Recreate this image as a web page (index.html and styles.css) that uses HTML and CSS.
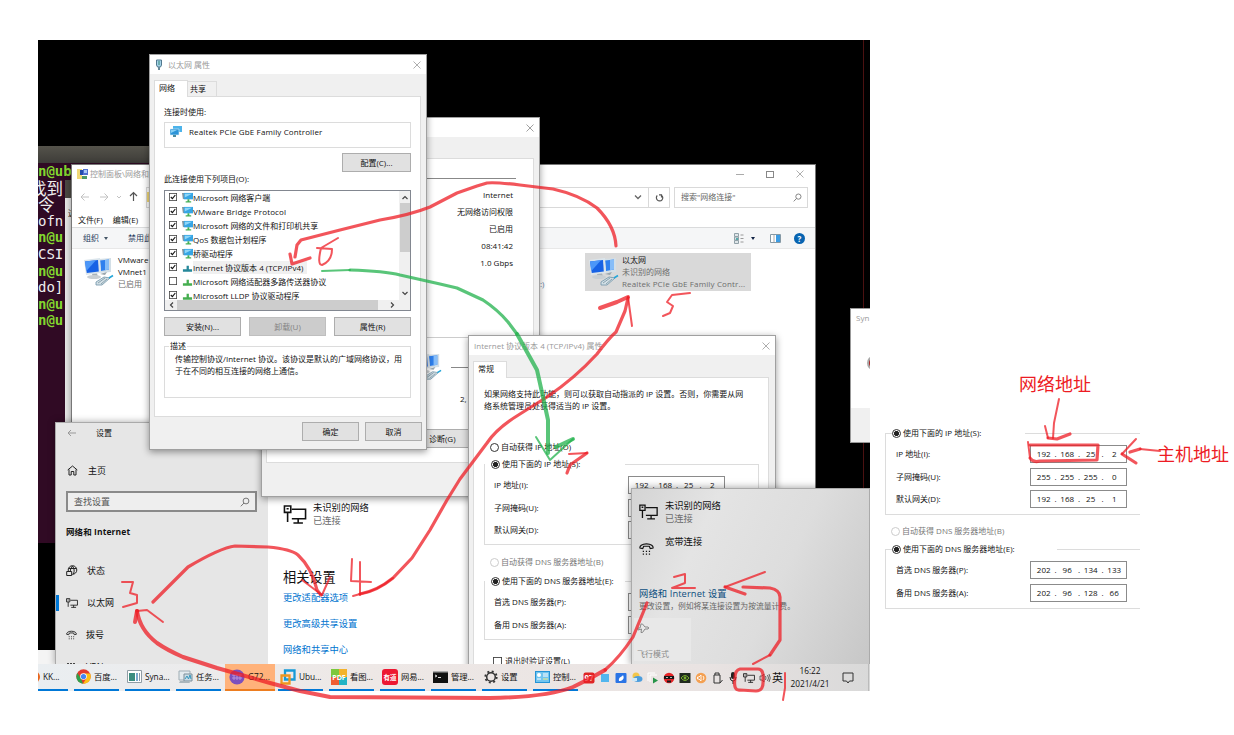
FILE: index.html
```html
<!DOCTYPE html>
<html lang="zh-CN">
<head>
<meta charset="utf-8">
<title>网络连接设置</title>
<link rel="stylesheet" href="styles.css">
</head>
<body>
<svg class="defs" width="0" height="0">
  <symbol id="x" viewBox="0 0 8 8"><path d="M.5.5l7 7M7.5.5l-7 7" fill="none" stroke="currentColor" stroke-width=".8"/></symbol>
  <symbol id="pcs" viewBox="0 0 32 32">
    <path d="M17 3l12-1v14l-12 1z" fill="#d3dfe7"/><path d="M18 4.500l9-1v10l-8 1.500z" fill="#2f80ee"/><path d="M23 4l4-.5v10l-4 .8z" fill="#86bdf8"/>
    <path d="M2 4l16-2 1 15-15 2z" fill="#dbe5ec"/><path d="M3 5.500l13-1.500.8 11.500-12 1.500z" fill="#1762e5"/><path d="M3 5.500l11-1.300-9 10-1 0z" fill="#4c97f8"/>
    <path d="M10 18l5-.5 1 3-5 .5z" fill="#a9b3b9"/><ellipse cx="12" cy="21" rx="7" ry="2" fill="#c9cfd3"/><path d="M18 18l7-2-2 3z" fill="#9aa6ad"/>
    <path d="M14 26l8-5 6 1-8 7-6 0z" fill="#d3e0e6" stroke="#6f93a7" stroke-width=".8"/><path d="M16 27l7-5M19 28l6-5" stroke="#688595" stroke-width=".7"/><path d="M27 22l4-2.500" stroke="#24a6d8" stroke-width="1.600"/>
  </symbol>
  <symbol id="mon" viewBox="0 0 12 12"><path d="M0 1l3 0v6l-2 1z" fill="#8496a0"/><path d="M2 1h10v7H2z" fill="#36a5e4"/><path d="M3 2h8L3 6z" fill="#8ed6f8"/><path d="M6 8h2v2h2v1.500H4V10h2z" fill="#45ae56"/></symbol>
  <symbol id="duo" viewBox="0 0 12 12"><path d="M3 0h9v6H3z" fill="#4cb3ea"/><path d="M0 3h9v6H0z" fill="#2c94d8" stroke="#d8ecf6" stroke-width=".6"/><path d="M1 4h6L1 7z" fill="#86cff5"/><path d="M3 9h3v2H3z" fill="#4a8a9c"/></symbol>
  <symbol id="net" viewBox="0 0 12 12"><path d="M5 4h2.500v4H11v2.500H1V8h4z" fill="currentColor"/></symbol>
  <symbol id="check" viewBox="0 0 8 8"><rect x=".4" y=".4" width="7.200" height="7.200" fill="#fff" stroke="#444" stroke-width=".8"/><path d="M1.800 4l1.600 1.700L6.300 2" fill="none" stroke="#111" stroke-width="1.100"/></symbol>
  <symbol id="uncheck" viewBox="0 0 8 8"><rect x=".4" y=".4" width="7.200" height="7.200" fill="#fff" stroke="#444" stroke-width=".8"/></symbol>
  <symbol id="lan" viewBox="0 0 22 18"><path d="M8 4h13v9H8M1 1h6v6H1zM3 3.500h2M4 7v9M14 13v4M9.500 17h9" fill="none" stroke="currentColor" stroke-width="1.500"/></symbol>
  <symbol id="phone" viewBox="0 0 16 14"><path d="M1 6c-.5-2 2-4.500 7-4.500S15.500 4 15 6l-3 .5-1-2.500H5L4 6.500z" fill="none" stroke="currentColor" stroke-width="1.200"/><path d="M4 9.500h1.300M7.300 9.500h1.300M10.500 9.500h1.300M4 12.500h1.300M7.300 12.500h1.300M10.500 12.500h1.300" stroke="currentColor" stroke-width="1.200"/></symbol>
  <symbol id="mag" viewBox="0 0 10 10"><circle cx="6" cy="4" r="2.900" fill="none" stroke="#777"/><path d="M4 6L.8 9.300" stroke="#777"/></symbol>
  <symbol id="folder" viewBox="0 0 12 12"><path d="M0 1h5v10H0z" fill="#f1d878"/><path d="M3 2h6v5H3z" fill="#244dad"/><path d="M6 1h5v6H6z" fill="#4f6fd0"/><path d="M7 2h3v3H7z" fill="#a9c8f5"/><path d="M5 8h5v3H5z" fill="#4c9a64"/></symbol>
</svg>

<main class="desktop">
  <section class="term">
    <div class="term-bar"></div>
    <div class="term-body">
      <p class="g">n@ub</p><p class="cjk cut">找到</p><p class="cjk">令</p><p>ofn</p><p class="g">n@u</p><p>CSI</p><p class="g">n@u</p><p>do]</p><p class="g">n@u</p><p class="g">n@u</p>
    </div>
  </section>
  <section class="vm-edge"><i></i><span>这</span></section>
  <div class="vm-line"></div>
  <div class="under"></div>

  <section class="win explorer">
    <header class="ex-title"><svg width="12" height="12"><use href="#folder"/></svg><span>控制面板\网络和</span>
      <div class="caps"><i class="min"></i><i class="max"></i><svg width="8" height="8"><use href="#x"/></svg></div></header>
    <div class="ex-nav">
      <svg width="64" height="12" fill="none" stroke="#c2c2c2"><path d="M1 6h8M4.500 2.500L1 6l3.500 3.500M20 6h8M24.500 2.500L28 6l-3.500 3.500M37 5l2 2 2-2"/><path d="M53.500 10V2M50 5l3.500-3.500L57 5" stroke="#555" stroke-width="1.200"/></svg>
      <div class="addr"><svg width="12" height="12"><use href="#folder"/></svg><b></b><svg width="8" height="6" fill="none" stroke="#666" stroke-width="1.300"><path d="M1 1.500l3 3 3-3"/></svg><em><svg width="9" height="9" fill="none" stroke="#555" stroke-width="1.200"><path d="M2.300 2.500A3.200 3.200 0 1 0 6.500 2.200M6.500 4.500V1.800H4"/></svg></em></div>
      <div class="find"><span>搜索"网络连接"</span><svg width="9" height="9"><use href="#mag"/></svg></div>
    </div>
    <div class="ex-menu"><span>文件(F)</span><span>编辑(E)</span></div>
    <div class="ex-tool"><span>组织</span><u></u><span>禁用此</span><b></b>
      <svg width="10" height="11"><path d="M.5.5h4v3h-4zM.5 4h4v3h-4zM.5 7.500h4v3h-4z" fill="#dfe6e9" stroke="#91a1a8"/><path d="M2 5h2v2H2z" fill="#5aa"/><path d="M6.500 2h3M6.500 5.500h3M6.500 9h3" stroke="#999"/></svg><u class="dark"></u>
      <svg width="11" height="9"><path d="M.5.5h10v8H.5z" fill="#fff" stroke="#8599a5"/><path d="M6 1h4v7H6z" fill="#3c9ce3"/><path d="M4 1v7" stroke="#aaa"/></svg><strong>?</strong></div>
    <div class="ex-items">
      <div class="conn first"><svg width="32" height="32"><use href="#pcs"/></svg><p>VMware<br>VMnet1<br><small>已启用</small></p></div>
      <span class="tail">:)</span>
      <div class="conn chosen"><svg width="32" height="32"><use href="#pcs"/></svg><p>以太网<br><small>未识别的网络<br><span class="nic">Realtek PCIe GbE Family Contr...</span></small></p></div>
    </div>
  </section>

  <section class="syn"><span>Syn</span><i></i><b></b></section>

  <section class="settings">
    <aside>
      <div class="set-top"><svg width="9" height="8" fill="none" stroke="#999"><path d="M9 4H1M4 1L1 4l3 3"/></svg><span>设置</span></div>
      <div class="set-home"><svg width="11" height="11" fill="none" stroke="#222"><path d="M.7 5L5.500 1l4.800 4M2 4.500V10h2.200V6.500h2.600V10H9V4.500"/></svg><span>主页</span></div>
      <div class="set-find"><span>查找设置</span><svg width="10" height="10"><use href="#mag"/></svg></div>
      <h2>网络和 Internet</h2>
      <ul>
        <li><svg width="12" height="12" fill="none" stroke="#222"><circle cx="6.500" cy="5" r="4.300"/><path d="M2.500 3.500h8M6.500 1C4 4 4 6 5 9M6.500 1c2 3 2 5 1 8"/><path d="M.7 6.500h5v4h-5z" fill="#e6e6e6"/></svg>状态</li>
        <li class="on"><svg width="12" height="10"><use href="#lan"/></svg>以太网</li>
        <li><svg width="11" height="10"><use href="#phone"/></svg>拨号</li>
        <li class="vpn"><svg width="11" height="10"><path d="M1 2h2M4 2h2M7 2h2" stroke="#111" stroke-width="1.500"/></svg>VPN</li>
      </ul>
    </aside>
    <article>
      <div class="lan-state"><svg width="24" height="19"><use href="#lan"/></svg><p>未识别的网络<br><small>已连接</small></p></div>
      <h3>相关设置</h3>
      <a>更改适配器选项</a><a>更改高级共享设置</a><a>网络和共享中心</a>
    </article>
  </section>

  <section class="win status">
    <header><svg width="8" height="8"><use href="#x"/></svg></header>
    <div class="st-panel">
      <div class="rule"></div>
      <p>Internet</p><p>无网络访问权限</p><p>已启用</p><p>08:41:42</p><p>1.0 Gbps</p>
      <div class="rule2"></div>
      <div class="act"><svg width="30" height="34"><use href="#pcs"/></svg><i></i></div>
      <div class="num">2,</div>
      <div class="btn diag">诊断(G)</div>
    </div>
  </section>

  <section class="win props">
    <header><svg width="8" height="11"><path d="M1.500 1h5v5l-1 2h-3l-1-2z" fill="#a5d2e8" stroke="#51788e"/><path d="M4 2v4" stroke="#387"/><path d="M3 8h2v3H3z" fill="#67899a"/></svg><span>以太网 属性</span><svg class="close" width="8" height="8"><use href="#x"/></svg></header>
    <nav><b>网络</b><span>共享</span></nav>
    <div class="panel">
      <label class="l1">连接时使用:</label>
      <div class="adapter"><svg width="12" height="12"><use href="#duo"/></svg><span>Realtek PCIe GbE Family Controller</span></div>
      <div class="cfg"><div class="btn">配置(C)...</div></div>
      <label class="l2">此连接使用下列项目(O):</label>
      <div class="list">
        <div class="rows">
          <div><svg width="8" height="8"><use href="#check"/></svg><svg width="11" height="11"><use href="#mon"/></svg><span>Microsoft 网络客户端</span></div>
          <div><svg width="8" height="8"><use href="#check"/></svg><svg width="11" height="11"><use href="#mon"/></svg><span class="wide">VMware Bridge Protocol</span></div>
          <div><svg width="8" height="8"><use href="#check"/></svg><svg width="11" height="11"><use href="#mon"/></svg><span>Microsoft 网络的文件和打印机共享</span></div>
          <div><svg width="8" height="8"><use href="#check"/></svg><svg width="11" height="11"><use href="#mon"/></svg><span>QoS 数据包计划程序</span></div>
          <div><svg width="8" height="8"><use href="#check"/></svg><svg width="11" height="11"><use href="#mon"/></svg><span>桥驱动程序</span></div>
          <div><svg width="8" height="8"><use href="#check"/></svg><svg class="teal" width="11" height="11"><use href="#net"/></svg><span class="sel">Internet 协议版本 4 (TCP/IPv4)</span></div>
          <div><svg width="8" height="8"><use href="#uncheck"/></svg><svg class="green" width="11" height="11"><use href="#net"/></svg><span>Microsoft 网络适配器多路传送器协议</span></div>
          <div><svg width="8" height="8"><use href="#check"/></svg><svg class="green" width="11" height="11"><use href="#net"/></svg><span>Microsoft LLDP 协议驱动程序</span></div>
        </div>
        <div class="vs"><svg width="6" height="5"><path d="M.5 4L3 1.500 5.500 4" fill="none" stroke="#444" stroke-width="1.200"/></svg><i></i><svg width="6" height="5"><path d="M.5 1L3 3.500 5.500 1" fill="none" stroke="#444" stroke-width="1.200"/></svg></div>
        <div class="hs"><svg width="5" height="6"><path d="M4 .5L1.500 3 4 5.500" fill="none" stroke="#444" stroke-width="1.200"/></svg><i></i><svg width="5" height="6"><path d="M1 .5L3.500 3 1 5.500" fill="none" stroke="#444" stroke-width="1.200"/></svg></div>
      </div>
      <div class="three"><div class="btn">安装(N)...</div><div class="btn off">卸载(U)</div><div class="btn">属性(R)</div></div>
      <fieldset class="desc"><legend>描述</legend>传输控制协议/Internet 协议。该协议是默认的广域网络协议，用<br>于在不同的相互连接的网络上通信。</fieldset>
    </div>
    <footer><div class="btn">确定</div><div class="btn">取消</div></footer>
  </section>

  <section class="win ip">
    <header><span>Internet 协议版本 4 (TCP/IPv4) 属性</span><svg class="close" width="8" height="8"><use href="#x"/></svg></header>
    <nav><b>常规</b></nav>
    <div class="panel">
      <p>如果网络支持此功能，则可以获取自动指派的 IP 设置。否则，你需要从网<br>络系统管理员处获得适当的 IP 设置。</p>
      <div class="radio"><i></i>自动获得 IP 地址(O)</div>
      <div class="group">
        <div class="radio cap on"><i></i>使用下面的 IP 地址(S):</div>
        <div class="field"><label>IP 地址(I):</label><div class="ipbox"><b>192</b><b>168</b><b>25</b><b>2</b></div></div>
        <div class="field"><label>子网掩码(U):</label><div class="ipbox"></div></div>
        <div class="field"><label>默认网关(D):</label><div class="ipbox"></div></div>
      </div>
      <div class="radio dim"><i></i>自动获得 DNS 服务器地址(B)</div>
      <div class="group dns">
        <div class="radio cap on"><i></i>使用下面的 DNS 服务器地址(E):</div>
        <div class="field"><label>首选 DNS 服务器(P):</label><div class="ipbox"></div></div>
        <div class="field"><label>备用 DNS 服务器(A):</label><div class="ipbox"></div></div>
      </div>
      <div class="verify"><svg width="9" height="9"><use href="#uncheck"/></svg>退出时验证设置(L)</div>
    </div>
  </section>

  <section class="flyout">
    <div class="fly-row"><svg width="19" height="16"><use href="#lan"/></svg><p>未识别的网络<br><small>已连接</small></p></div>
    <div class="fly-row second"><svg width="15" height="14"><use href="#phone"/></svg><p>宽带连接</p></div>
    <h4>网络和 Internet 设置</h4>
    <p class="hint">更改设置，例如将某连接设置为按流量计费。</p>
    <div class="tile"><svg width="13" height="12" fill="none" stroke="#888"><path d="M1 6l2 0 1-4 1.500 0L8 5h3q1.500 1 0 2H8L5.500 10.500H4L4.500 7 1 8z"/></svg><span>飞行模式</span></div>
  </section>

  <footer class="taskbar">
    <div class="task cut"><svg width="14" height="14"><circle cx="5" cy="7" r="6" fill="#e8641b"/></svg>KK...</div>
    <div class="task"><svg width="15" height="15"><circle cx="7.500" cy="7.500" r="7.200" fill="#e33b2e"/><path d="M1.300 4L5 9.500l2 5.200A7.200 7.200 0 0 1 1.300 4z" fill="#2da14c"/><path d="M7.500 4.500h6.600A7.200 7.200 0 0 1 7 14.700L10.500 9z" fill="#fbc116"/><circle cx="7.500" cy="7.500" r="3.300" fill="#fff"/><circle cx="7.500" cy="7.500" r="2.600" fill="#4285f4"/></svg>百度...</div>
    <div class="task"><svg width="15" height="13"><path d="M.5.5h14v12H.5z" fill="#fff" stroke="#8f9da5"/><path d="M2 3h6v8H2z" fill="#3b8d80"/><path d="M9 3h2v8H9z" fill="#79a8cd"/><path d="M12 3h1v8h-1z" fill="#89a"/></svg>Syna...</div>
    <div class="task"><svg width="15" height="13"><path d="M1 1h11v9H1z" fill="#e3eaee" stroke="#9fadb5"/><path d="M6 4h8v7H6z" fill="#c9dce6" stroke="#7c8f9a"/><path d="M7 9l2-3 1.500 3L12 5l1 4" fill="none" stroke="#3596bc"/><path d="M2 11l9 0 1 2H1z" fill="#aab6bc"/></svg>任务...</div>
    <div class="task hot"><svg width="16" height="16"><circle cx="8" cy="8" r="7.600" fill="#7d50bd"/><path d="M3 6h10M3 9h10M5 5v6M8 5v6M11 5v6" stroke="#b494df"/></svg>G72...</div>
    <div class="task"><svg width="16" height="16" fill="none" stroke-width="2.300"><path d="M5 1.500h9.500v9H5z" stroke="#169bd7"/><path d="M1.500 6.500h8v8h-8z" stroke="#ef9620"/></svg>Ubu...</div>
    <div class="task"><svg width="16" height="16"><path d="M0 0h8v8H0z" fill="#7dc83d"/><path d="M8 0h8v8H8z" fill="#f4b32c"/><path d="M0 8h8v8H0z" fill="#f05c32"/><path d="M8 8h8v8H8z" fill="#23b3c5"/><text x="8" y="11" text-anchor="middle" class="pdf">PDF</text></svg>看图...</div>
    <div class="task"><svg width="16" height="16"><rect width="16" height="16" rx="3" fill="#ed1832"/><text x="8" y="11" text-anchor="middle" class="yd">有道</text></svg>网易...</div>
    <div class="task"><svg width="15" height="12"><path d="M0 0h15v12H0z" fill="#111"/><path d="M0 0h15v1.500H0z" fill="#aaa"/><path d="M2 4l2 1-2 1M5 6.500h3" stroke="#ddd" fill="none"/></svg>管理...</div>
    <div class="task"><svg width="14" height="14" fill="none" stroke="#333"><circle cx="7" cy="7" r="4.300" stroke-width="1.500"/><circle cx="7" cy="7" r="5.700" stroke-width="1.800" stroke-dasharray="2 2.480"/></svg>设置</div>
    <div class="task"><svg width="15" height="12"><path d="M0 0h15v12H0z" fill="#2493d6"/><path d="M1 1h13v10H1z" fill="#72c5ef"/><circle cx="4" cy="4" r="2" fill="#fff"/><path d="M8 3h5M8 5h5M2 8h4" stroke="#fff"/><path d="M8 8h5" stroke="#ee8"/></svg>控制...</div>
    <div class="tray">
      <svg width="12" height="12"><rect x=".5" y=".5" width="11" height="11" rx="2" fill="#df2525"/><text x="6" y="9" class="t97" text-anchor="middle">97</text></svg>
      <svg width="12" height="12"><path d="M2 2h8v8H2z" fill="#52b6ee"/></svg>
      <svg width="12" height="12"><rect x=".5" y="1" width="11" height="10" rx="1" fill="#2b74e5"/><path d="M4 9C3 5 7 5 8 3c2 4-1 6-4 6z" fill="#fff"/></svg>
      <svg width="12" height="12"><circle cx="5" cy="4" r="3.500" fill="#f2c64b"/><ellipse cx="7" cy="7" rx="4.500" ry="3" fill="#4c9ddd"/><path d="M1 6h5v3H1z" fill="#cce8f8"/></svg>
      <svg width="12" height="12"><path d="M1 9V1h7M3 10V3h7" stroke="#fff" fill="none"/><path d="M6 5.500l5 3-5 3z" fill="#279448"/></svg>
      <svg width="12" height="12"><circle cx="6" cy="6" r="5.300" fill="#e42427"/><path d="M1 4h10v3H1z" fill="#171717"/><path d="M3 5.500h2M7 5.500h2" stroke="#fff" stroke-width=".7"/><path d="M4 8.500h4v2H4z" fill="#181818"/></svg>
      <svg width="12" height="12"><path d="M.5 1h11v10H.5z" fill="#20291e"/><path d="M2 6q4-5 8 0-4 5-8 0z" fill="none" stroke="#78ae2c"/><circle cx="6" cy="6" r="1.400" fill="#78ae2c"/></svg>
      <svg width="12" height="12"><circle cx="6" cy="6" r="5.300" fill="#f4a052"/><path d="M2.500 5h1.500l2-2v6L4 7H2.500zM8 4q2 2 0 4" fill="none" stroke="#fff" stroke-width=".9"/></svg>
      <svg width="12" height="12" fill="none" stroke="#333"><path d="M4 3V1h4v2M3 3h6v8H3zM9 11l2.500-3"/></svg>
      <svg width="12" height="12"><rect x="4" y="0" width="4" height="7" rx="2" fill="#222"/><path d="M3 5q0 4 3 4t3-4M6 9v3" fill="none" stroke="#222"/></svg>
      <svg width="12" height="12"><use href="#lan" width="12" height="12"/></svg>
      <svg width="12" height="12" fill="none" stroke="#444"><path d="M1 4h2l2-2v8L3 8H1zM6.500 4q1 2 0 4M8.500 3q2 3 0 6M10 2q2.500 4 0 8" stroke-width=".8"/></svg>
      <span>英</span>
    </div>
    <time>16:22<br>2021/4/21</time>
    <svg class="note" width="12" height="12" fill="none" stroke="#333"><path d="M1 1h10v8H7.500L6 11 4.500 9H1z"/></svg>
    <i class="peek"></i>
  </footer>
</main>

<section class="excerpt">
  <div class="group">
    <div class="radio cap on"><i></i>使用下面的 IP 地址(S):</div>
    <div class="field"><label>IP 地址(I):</label><div class="ipbox"><b>192</b><b>168</b><b>25</b><b>2</b></div></div>
    <div class="field"><label>子网掩码(U):</label><div class="ipbox"><b>255</b><b>255</b><b>255</b><b>0</b></div></div>
    <div class="field"><label>默认网关(D):</label><div class="ipbox"><b>192</b><b>168</b><b>25</b><b>1</b></div></div>
  </div>
  <div class="radio dim"><i></i>自动获得 DNS 服务器地址(B)</div>
  <div class="group dns">
    <div class="radio cap on"><i></i>使用下面的 DNS 服务器地址(E):</div>
    <div class="field"><label>首选 DNS 服务器(P):</label><div class="ipbox"><b>202</b><b>96</b><b>134</b><b>133</b></div></div>
    <div class="field"><label>备用 DNS 服务器(A):</label><div class="ipbox"><b>202</b><b>96</b><b>128</b><b>66</b></div></div>
  </div>
</section>

<strong class="note-net">网络地址</strong>
<strong class="note-host">主机地址</strong>

<svg class="ink" width="1234" height="735" viewBox="0 0 1234 735">
  <g class="red">
    <path class="mid" d="M616 246Q615 226 597 208Q580 195 553 189L520 185Q495 182 487 183L477 186L457 193L430 207Q410 215 380 220L340 230L301 240L297 245L295 257"/>
    <path class="mid" d="M290 254L292 264L310 258"/>
    <path class="thin" d="M338 238L321 248Q317 265 322 265Q332 261 332 249L317 248"/>
    <path class="thin" d="M353 596L360 594Q377 591 393 578"/>
    <path class="mid" d="M360 594Q377 591 393 578L412 558L430 530L447 500L460 479L487 443Q497 428 520 414L547 397Q575 378 597 354Q609 338 616 332L625 311L628 298"/>
    <path d="M600 308L617 302L628 297"/><path class="thin" d="M628 297L632 326"/>
    <path class="thin" d="M690 293L672 295L667 302L673 306L670 313L663 316"/>
    <path class="thin" d="M352 559L351 581L371 582M360 562L360 595"/>
    <path class="mid" d="M153 602L188 567Q220 548 235 546L268 547Q291 549 298 555Q312 568 317 590L321 595"/><path class="thin" d="M302 580L322 595L330 577"/>
    <path d="M122 582L133 582L130 593L137 595L137 603L123 607" class="thin"/>
    <path d="M135 622L137 611"/><path class="thin" d="M137 611L147 610L163 622"/>
    <path d="M137 611Q140 630 157 643Q167 650 183 657L217 668L270 683L300 691L330 697L490 698Q548 697 573 687Q590 679 605 670"/><path class="mid" d="M605 670Q620 657 633 637L647 603"/>
    <path class="thin" d="M674 577L685 574L685 583L672 588L695 588"/>
    <path class="thin" d="M765 572L725 587"/><path class="mid" d="M725 587L745 594M743 587L770 588Q780 590 780 597L780 640L770 655"/><path class="thin" d="M770 655L753 664"/>
    <path class="mid" d="M735 678Q733 691 740 690L756 691Q764 691 763 680Q764 669 758 669L740 669Q735 670 735 678"/><path class="thin" d="M785 673L785 688L783 700"/>
    <path class="thin" d="M1059 399L1054 423L1053 438M1045 426L1048 438"/><path class="mid" d="M1048 438L1057 439L1070 434"/>
    <path class="thin" d="M1028 442L1030 458"/><path class="mid" d="M1030 458Q1033 463 1040 461L1097 460L1098 445L1030 445"/>
    <path class="thin" d="M1136 439L1122 454M1140 449L1160 451"/><path class="mid" d="M1122 454L1136 463M1130 452L1140 449"/>
    <path class="mid" d="M567 473L570 465L587 453"/><path class="thin" d="M587 453L569 454"/>
  </g>
  <g class="grn">
    <path class="thin" d="M322 271L350 270"/><path class="mid" d="M350 270Q385 271 400 275L440 284L457 288L483 300Q498 310 508 322L517 334"/><path d="M517 334L537 370L543 397L548 420L548 453"/>
    <path class="thin" d="M536 437L550 460L573 439"/><path d="M556 447L573 439"/>
  </g>
</svg>
</body>
</html>
```
FILE: styles.css
```css
* { box-sizing: border-box; }
body { margin: 0; width: 1234px; height: 735px; position: relative; overflow: hidden; background: #fff; color: #111;
  font: 8px/12px "Open Sans", "Noto Sans CJK SC", sans-serif; white-space: nowrap; }
p, h2, h3, h4, ul { margin: 0; padding: 0; font-weight: 400; }
svg { display: block; flex: none; }
i, em { font-style: normal; }
small { font-size: inherit; color: #6d6d6d; }
.defs { position: absolute; }

.desktop { position: absolute; left: 38px; top: 40px; width: 832px; height: 651px; background: #000; overflow: hidden; }
.win { position: absolute; background: #f0f0f0; border: 1px solid #a0a0a0; box-shadow: 0 2px 7px rgba(0,0,0,.4); }
.btn { display: flex; align-items: center; justify-content: center; height: 19px; background: #e1e1e1; border: 1px solid #adadad; }
.btn.off { background: #ccc; border-color: #bfbfbf; color: #838383; }

.term { position: absolute; left: 0; top: 106px; width: 150px; height: 397px; background: #300a24; }
.term-bar { height: 17px; background: linear-gradient(#55534b, #3d3c38); }
.term-body { width: 38px; overflow: hidden; color: #eee; font: 14px/16.6px "DejaVu Sans Mono", "Noto Sans CJK SC", monospace; }
.term-body p { height: 16.6px; }
.term-body .g { color: #83d62f; font-weight: 700; }
.term-body .cjk { font: 16.500px/16.600px "Noto Sans CJK SC", sans-serif; }
.term-body .cut { margin-left: -8px; }
.vm-edge { position: absolute; left: 27px; top: 140px; width: 30px; height: 363px; background: #e9e9e9; display: flex; flex-direction: column; padding-left: 3px; border-radius: 4px 0 0; }
.vm-edge i { height: 18px; margin-left: -3px; background: #4c4943; }
.vm-edge span { margin-top: 9px; }
.vm-line { position: absolute; left: 825px; top: 0; width: 1px; height: 448px; background: #4b1111; }
.under { position: absolute; left: 0; top: 610px; width: 20px; height: 15px; background: #f4f4f4; }

.explorer { left: 33px; top: 124px; width: 745px; height: 480px; background: #fff; border-color: #777; }
.ex-title { height: 18px; display: flex; align-items: center; padding-left: 5px; gap: 1px; color: #999; }
.caps { margin-left: auto; display: flex; align-items: center; gap: 22px; padding-right: 11px; color: #999; }
.min { width: 8px; height: 1px; background: #aaa; }
.max { width: 8px; height: 7px; border: 1px solid #888; }
.ex-nav { height: 28px; display: flex; align-items: center; padding: 0 7px 0 8px; }
.addr { width: 524px; height: 21px; margin-left: 2px; border: 1px solid #d9d9d9; display: flex; align-items: center; }
.addr b { flex: 1; }
.addr em { width: 21px; height: 19px; margin-left: 6px; display: flex; align-items: center; justify-content: center; border-left: 1px solid #d9d9d9; }
.find { margin-left: auto; width: 134px; height: 21px; border: 1px solid #d9d9d9; display: flex; align-items: center; justify-content: space-between; padding: 0 5px 0 6px; color: #666; }
.ex-menu { height: 16px; display: flex; gap: 10px; padding-left: 6px; line-height: 17px; }
.ex-tool { height: 22px; display: flex; align-items: center; padding: 0 10px 0 11px; background: #f5f6f7; border-top: 1px solid #dadbdc; border-bottom: 1px solid #e8e8e8; color: #1e395b; }
.ex-tool u { border: 2.500px solid transparent; border-top: 3px solid #456; margin: 3px 20px 0 5px; }
.ex-tool u.dark { margin: 3px 15px 0 7px; border-top-color: #124; }
.ex-tool b { flex: 1; }
.ex-tool strong { width: 11px; height: 11px; border-radius: 50%; margin-left: 13px; background: #0864b1; color: #fff; line-height: 11px; text-align: center; }
.ex-items { display: flex; align-items: flex-start; padding-top: 4px; }
.conn { display: flex; align-items: center; gap: 4px; width: 167px; height: 38px; }
.first { padding-left: 10px; }
.chosen { background: #d9d9d9; padding-left: 2px; gap: 3px; width: 166px; margin-left: -1px; }
.nic { letter-spacing: .14px; }
.tail { margin: 25px 42px 0 301px; color: #5b7ca2; width: 4px; }

.syn { position: absolute; left: 812px; top: 268px; width: 30px; height: 135px; background: #fff; border: 1px solid #999; overflow: hidden; display: flex; flex-direction: column; justify-content: space-between; color: #999; }
.syn span { padding: 3px 0 0 5px; }
.syn i { width: 12px; height: 14px; border-radius: 50%; margin: 0 0 7px 16px; border: 2px solid #aaa; background: #a22; }
.syn b { height: 34px; background: #f0f0f0; }

.settings { position: absolute; left: 17px; top: 382px; width: 580px; height: 243px; display: flex; background: #fff; border: 1px solid #aaa; box-shadow: 0 0 7px rgba(0,0,0,.35); font-size: 9px; }
.settings aside { width: 212px; background: #e6e6e6; }
.set-top { height: 20px; display: flex; align-items: center; padding-left: 11px; gap: 20px; font-size: 8px; }
.set-home { height: 27px; margin-top: 14px; display: flex; align-items: center; padding-left: 11px; gap: 10px; }
.set-find { margin: 7px 11px 0 10px; height: 21px; border: 2px solid #8a8a8a; background: #eee; display: flex; align-items: center; justify-content: space-between; padding: 0 5px 0 6px; color: #555; }
.settings h2 { font: 700 8.500px/12px "Open Sans", "Noto Sans CJK SC", sans-serif; margin: 14px 0 17px 10px; letter-spacing: .1px; }
.settings ul { list-style: none; }
.settings li { height: 32px; display: flex; align-items: center; gap: 9px; padding-left: 10px; }
.settings li.on { border-left: 3px solid #0078d7; padding-left: 7px; height: 16px; margin: 8px 0; }
.settings article { padding: 78px 0 0 15px; }
.lan-state { display: flex; gap: 6px; align-items: center; font-size: 9.300px; line-height: 13px; }
.settings h3 { font-size: 13.200px; line-height: 18px; margin: 41px 0 4px; }
.settings a { display: block; height: 26px; line-height: 15px; font-size: 9.300px; color: #0074cf; }

.status { left: 223px; top: 77px; width: 279px; height: 380px; }
.status header { height: 19px; background: #fff; display: flex; justify-content: flex-end; align-items: center; padding-right: 5px; color: #888; }
.st-panel { margin: 21px 5px 0 4px; height: 305px; background: #fff; border: 1px solid #dcdcdc; padding-right: 10px; }
.rule { height: 20px; border-bottom: 1px solid #888; margin-bottom: 7px; margin-right: 7px; }
.st-panel p { height: 17px; line-height: 17px; text-align: right; padding-right: 10px; }
.rule2 { height: 67px; border-bottom: 1px solid #ccc; margin-right: -10px; }
.act { display: flex; align-items: center; padding: 12px 0 0 145px; gap: 9px; }
.act i { width: 17px; height: 1px; background: #888; }
.num { padding: 9px 0 0 193px; }
.diag { margin: 24px 0 0 136px; width: 80px; justify-content: flex-start; padding-left: 25px; }

.props { left: 111px; top: 14px; width: 278px; height: 396px; }
.props header, .ip header { height: 19px; background: #fff; color: #999; display: flex; align-items: center; padding: 0 5px; gap: 5px; }
.close { margin-left: auto; }
.win nav { display: flex; align-items: flex-end; height: 22px; padding-left: 4px; }
.win nav b, .win nav span { font-weight: 400; padding: 0 0 0 4px; line-height: 14px; }
.win nav b { width: 34px; height: 17px; margin-bottom: -1px; background: #fff; border: 1px solid #dcdcdc; border-bottom: 0; }
.win nav span { height: 15px; width: 29px; padding-left: 2px; border: 1px solid #dcdcdc; border-width: 1px 1px 0 0; }
.props .panel { margin: 0 5px 0 4px; height: 321px; background: #fff; border: 1px solid #dcdcdc; padding: 9px 9px 0; }
.l1, .l2 { display: block; }
.adapter { height: 26px; margin-top: 4px; border: 1px solid #dcdcdc; display: flex; align-items: flex-start; gap: 7px; padding: 3px 0 0 5px; letter-spacing: .13px; }
.cfg { display: flex; justify-content: flex-end; margin: 5px 0 1px; }
.cfg .btn { width: 69px; }
.l2 { margin-bottom: 5px; }
.list { height: 121px; border: 1px solid #828790; display: grid; grid-template: 109px 10px / 1fr 11px; }
.rows { overflow: hidden; }
.rows div { height: 14px; display: flex; align-items: center; gap: 5px; padding-left: 4px; }
.rows div:first-child { margin-top: -1px; }
.rows svg + svg { margin-right: -5px; }
.rows span { height: 13px; line-height: 13px; }
.rows .sel { background: #f0f0f0; padding-right: 4px; }
.wide { letter-spacing: .15px; }
.teal { color: #26889a; } .green { color: #45ae4f; }
.vs { background: #f0f0f0; display: flex; flex-direction: column; align-items: center; padding: 4px 0; gap: 3px; }
.vs i { width: 10px; height: 49px; background: #cdcdcd; margin-bottom: auto; }
.hs { background: #f0f0f0; grid-column: 1 / 3; display: flex; align-items: center; padding: 0 15px 0 4px; gap: 3px; }
.hs i { width: 201px; height: 10px; background: #cdcdcd; margin-right: auto; }
.three { display: grid; grid-template-columns: 77px 77px 77px; justify-content: space-between; margin-top: 6px; }
.desc { height: 58px; margin: 4px 0 0; border: 1px solid #dcdcdc; padding: 1px 10px; line-height: 12px; min-width: 0; }
.desc legend { padding: 0 1px; margin-left: -6px; line-height: 12px; }
.props footer { display: flex; justify-content: flex-end; gap: 6px; padding: 5px 4px 0; }
.props footer .btn { width: 57px; }

.ip { left: 430px; top: 295px; width: 308px; height: 380px; }
.ip nav { height: 22px; }
.ip .panel { margin: 0 6px 0 4px; height: 330px; background: #fff; border: 1px solid #dcdcdc; padding: 10px 9px 0 10px; }
.radio { display: flex; align-items: center; gap: 2px; height: 14px; }
.ip .radio { padding-left: 6px; margin-top: 28px; }
.radio i { width: 9px; height: 9px; border: 1px solid #333; border-radius: 50%; background: #fff; }
.radio.on i { background: radial-gradient(#222 0 2.200px, #fff 2.900px); }
.radio.dim { color: #777; } .radio.dim i { border-color: #ccc; }
.group { border: 1px solid #dcdcdc; height: 81px; }
.ip .group { margin-top: 10px; }
.ip .group .cap { margin: -8px auto 3px 0; padding: 0 0 0 6px; width: 140px; background: #fff; }
.field { height: 22.500px; display: flex; align-items: center; justify-content: space-between; padding: 0 34px 0 10px; }
.ip .field { padding: 0 33px 0 9px; }
.ipbox { width: 97px; height: 18px; border: 1px solid #8b8b8b; background: #fff; display: grid; grid-template-columns: repeat(4, 23.500px); padding-left: 1px; line-height: 15px; }
.ipbox b { font-weight: 400; text-align: center; letter-spacing: .15px; position: relative; }
.ipbox b + b::before { content: "."; position: absolute; left: -1px; }
.ip .radio.dim { margin-top: 10px; }
.ip .group.dns { margin-top: 12px; height: 59px; }
.ip .group.dns .cap { margin-top: -8px; }
.verify { display: flex; gap: 3px; align-items: center; padding: 15px 0 0 9px; }

.flyout { position: absolute; left: 593px; top: 448px; width: 239px; height: 177px; padding: 10px 0 0 7px; background: linear-gradient(115deg, #d4d4d4, #e4e4e4 28%, #ddd 60%, #c7c7c7); border: 1px solid #aaa; font-size: 9.300px; line-height: 13px; box-shadow: 0 0 8px rgba(0,0,0,.4); }
.fly-row { display: flex; align-items: center; gap: 7px; height: 26px; }
.fly-row.second { margin-top: 10px; gap: 11px; align-items: flex-start; }
.fly-row.second svg { margin-top: 7px; }
.flyout h4 { color: #0b4e7e; font-size: 9.300px; line-height: 13px; margin-top: 26px; letter-spacing: .1px; }
.hint { font-size: 7.800px; color: #666; }
.tile { width: 57px; height: 43px; background: #e8e8e8; margin: 5px 0 0 -5px; padding: 4px 3px 1px; display: flex; flex-direction: column; justify-content: space-between; color: #888; font-size: 8px; }

.taskbar { position: absolute; left: 0; top: 624px; width: 832px; height: 27px; display: flex; background: linear-gradient(90deg, #eaeef1, #eee8e6 40%, #e9e3e2 80%, #d9d9d9); font-size: 8.300px; }
.task { width: 45px; height: 27px; margin-right: 6px; padding-left: 2px; flex: none; border-bottom: 2px solid #0078d7; display: flex; align-items: center; gap: 3px; letter-spacing: -.05px; }
.task.cut { width: 30px; padding: 0; gap: 0; }
.task.cut svg { margin-left: -9px; }
.task.hot { width: 50px; margin: 0 3px 0 -2px; padding-left: 4px; background: #ffb27a; border-color: #ed7d20; }
.pdf { font-size: 7px; font-weight: 700; fill: #fff; } .yd { font-size: 6.500px; font-weight: 700; fill: #fff; }
.t97 { font-size: 8px; font-weight: 700; fill: #fff; }
.tray { display: flex; align-items: center; gap: 4px; margin-left: -1px; flex: none; }
.tray span { font-size: 11px; margin-left: -3px; }
.taskbar time { text-align: center; line-height: 12.500px; padding-top: 1px; width: 46px; margin-left: 4px; flex: none; letter-spacing: -.05px; }
.note { margin: 8px 0 0 9px; }
.peek { margin-left: auto; width: 2px; border-left: 1px solid #bbb; }

.excerpt { position: absolute; left: 885px; top: 433px; width: 255px; height: 180px; }
.excerpt .group { border-right: 0; height: 82px; }
.excerpt .group .cap { margin: -8px 0 3px 6px; background: #fff; width: 133px; }
.excerpt .group.dns .cap { width: 165px; }
.excerpt .group.dns { height: 60px; margin-top: 11px; }
.excerpt .field { padding-right: 13px; }
.excerpt .radio.dim { margin: 9px 0 0 6px; }
.note-net, .note-host { position: absolute; color: #ed1c24; font: 400 18px/24px "Noto Sans CJK SC", sans-serif; }
.note-net { left: 1019px; top: 371px; } .note-host { left: 1157px; top: 441px; }

.ink { position: absolute; left: 0; top: 0; fill: none; stroke-linecap: round; stroke-linejoin: round; stroke-width: 4; }
.red { stroke: #ed1c24; stroke-opacity: .75; } .grn { stroke: #22b14c; stroke-opacity: .75; }
.ink .mid { stroke-width: 3.200; }
.ink .thin { stroke-width: 2; }
```
